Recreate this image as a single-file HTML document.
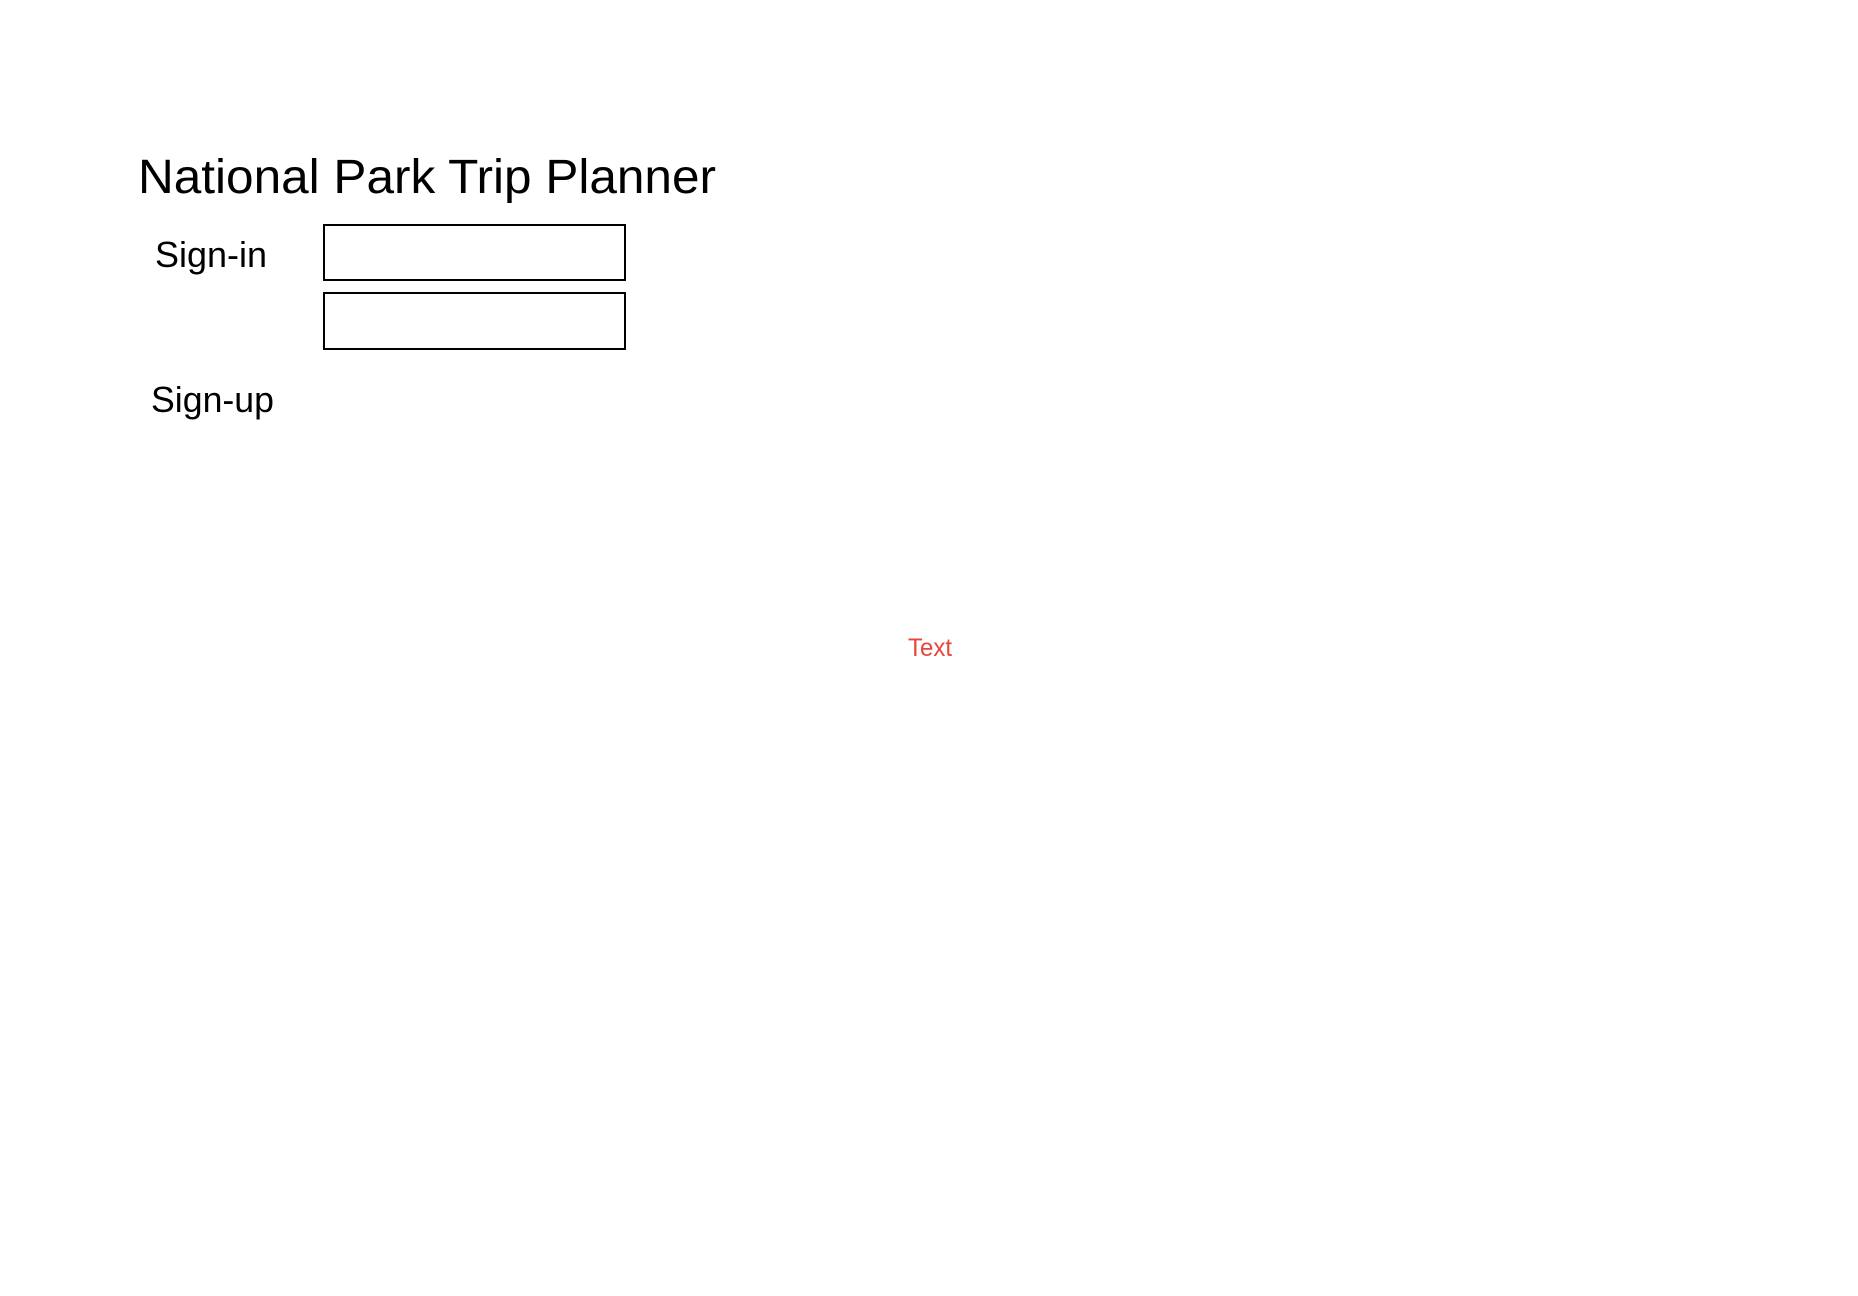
<!DOCTYPE html>
<html><head><meta charset="utf-8"><style>
html,body{margin:0;padding:0;background:#fff;width:1858px;height:1296px;overflow:hidden}
svg{display:block}
</style></head><body>
<svg width="1858" height="1296" xmlns="http://www.w3.org/2000/svg" font-family="Liberation Sans, sans-serif">
<text x="138" y="193" font-size="48" textLength="578" lengthAdjust="spacingAndGlyphs" fill="#000">National Park Trip Planner</text>
<text x="155" y="267" font-size="36" textLength="112" lengthAdjust="spacingAndGlyphs" fill="#000">Sign-in</text>
<rect x="324" y="225" width="301" height="55" fill="none" stroke="#000" stroke-width="2"/>
<rect x="324" y="293" width="301" height="56" fill="none" stroke="#000" stroke-width="2"/>
<text x="151" y="412" font-size="36" textLength="123" lengthAdjust="spacingAndGlyphs" fill="#000">Sign-up</text>
<text x="908" y="656" font-size="25" textLength="44" lengthAdjust="spacingAndGlyphs" fill="#e8453c">Text</text>
</svg>
</body></html>
